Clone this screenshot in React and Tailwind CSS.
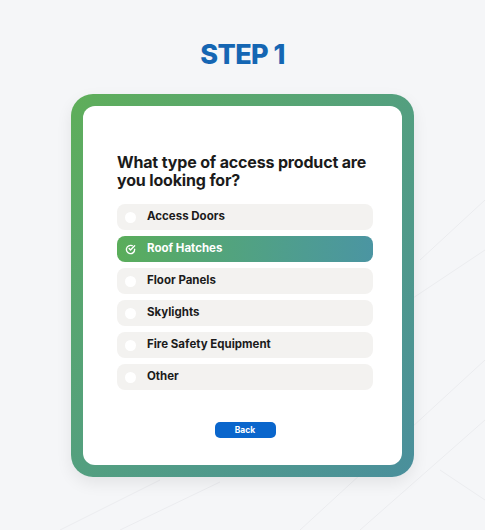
import { useState } from 'react'

const options = ['Access Doors', 'Roof Hatches', 'Floor Panels', 'Skylights', 'Fire Safety Equipment', 'Other']

const font = { fontFamily: 'Inter, "Noto Sans", sans-serif' }

const CheckCircle = () => (
  <svg width="11" height="11" viewBox="0 0 24 24" fill="none" stroke="white" strokeWidth="3" strokeLinecap="round" strokeLinejoin="round">
    <path d="M21 11.1V12a9 9 0 1 1-5.3-8.2" />
    <path d="M21 4 12 13l-3-3" />
  </svg>
)

export default function App() {
  const [selected, setSelected] = useState('Roof Hatches')

  return (
    <div className="relative w-[485px] h-[530px] bg-[#f5f6f8] overflow-hidden flex flex-col items-center" style={font}>
      {/* faint blueprint lines in the background */}
      <svg className="absolute left-0 top-0" width="485" height="530" fill="none" stroke="#ebecef" strokeWidth="1">
        <path d="M300 530 L485 360" />
        <path d="M360 530 L485 420" />
        <path d="M420 260 L485 200" />
        <path d="M410 300 L485 250" />
        <path d="M60 530 L160 480" />
        <path d="M120 530 L220 482" />
        <path d="M440 470 L485 500" />
      </svg>

      <h1 className="relative mt-[38px] text-[27px] leading-[34px] font-extrabold text-[#1566b3] tracking-[-0.02em]">STEP 1</h1>

      <div className="relative mt-[22px] w-[343px] h-[383px] rounded-[22px] p-[12px] bg-gradient-to-br from-[#5fae59] to-[#4a8f9c] shadow-[0_6px_16px_rgba(0,0,0,0.08)]">
        <div className="h-full bg-white rounded-[12px] pt-[47px] pl-[34px] flex flex-col">
          <div className="w-[256px] flex flex-col">
            <h2 className="text-[16px] leading-[18px] font-bold text-[#1b1b1b] tracking-[-0.01em]">
              What type of access product are you looking for?
            </h2>

            <div className="mt-[15px] flex flex-col gap-[6px]">
              {options.map((opt) => {
                const active = opt === selected
                return (
                  <button
                    key={opt}
                    onClick={() => setSelected(opt)}
                    className={`h-[26px] w-full rounded-[8px] flex items-center pl-[8px] gap-[11px] text-left ${
                      active
                        ? 'bg-gradient-to-r from-[#5aad5a] to-[#4b95a2] text-white'
                        : 'bg-[#f3f2f0] text-[#1b1b1b]'
                    }`}
                  >
                    <span className="w-[11px] h-[11px] flex items-center justify-center">
                      {active ? <CheckCircle /> : <span className="w-[11px] h-[11px] rounded-full bg-white" />}
                    </span>
                    <span className="text-[11.5px] font-bold">{opt}</span>
                  </button>
                )
              })}
            </div>

            <div className="mt-[32px] flex justify-center">
              <button className="w-[61px] h-[16px] rounded-[5px] bg-[#0a66cc] text-white text-[8.5px] font-bold leading-none">
                Back
              </button>
            </div>
          </div>
        </div>
      </div>
    </div>
  )
}
